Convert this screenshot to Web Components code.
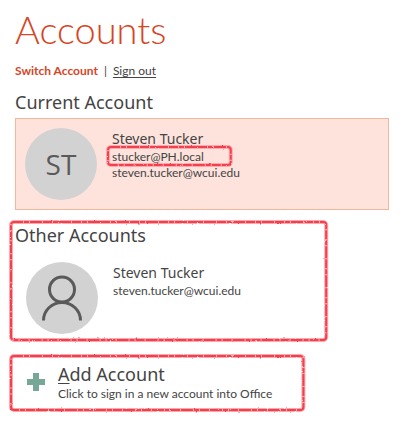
<!DOCTYPE html>
<html lang="en">
<head>
<meta charset="utf-8">
<meta name="viewport" content="width=device-width, initial-scale=1">
<title>Accounts</title>
<style>
    body {
        --heading-font: "Noto Sans", "Open Sans", sans-serif;
        margin: 0;
        background: #fff;
        color: #444;
        font-family: Lato, "Open Sans", sans-serif;
        font-size: 12px;
        line-height: 16px;
    }
</style>
</head>
<body>
<accounts-page></accounts-page>

<script>
// Rough felt-pen outline drawn around whatever is slotted in
class MarkerBox extends HTMLElement {
    constructor() {
        super();
        this.attachShadow({ mode: 'open' });
    }

    connectedCallback() {
        this.shadowRoot.innerHTML = `
            <style>
                :host {
                    display: block;
                    position: relative;
                }
                svg {
                    position: absolute;
                    inset: 0;
                    width: 100%;
                    height: 100%;
                    overflow: visible;
                    pointer-events: none;
                }
                rect {
                    x: 2px;
                    y: 2px;
                    width: calc(100% - 4px);
                    height: calc(100% - 4px);
                    fill: none;
                }
                .soft {
                    stroke: #fba9b0;
                    stroke-width: 4;
                }
                .ink {
                    stroke: #f5404c;
                    stroke-width: 2;
                    stroke-dasharray: 9 1 5 1 12 1;
                }
            </style>
            <slot></slot>
            <svg aria-hidden="true">
                <filter id="rough" x="-5%" y="-20%" width="110%" height="140%" color-interpolation-filters="sRGB">
                    <feTurbulence type="fractalNoise" baseFrequency="0.35" numOctaves="2" seed="4"/>
                    <feDisplacementMap in="SourceGraphic" scale="2" xChannelSelector="R" yChannelSelector="G"/>
                </filter>
                <g filter="url(#rough)">
                    <rect class="soft" rx="3"/>
                    <rect class="ink" rx="3"/>
                </g>
            </svg>
        `;
    }
}

class AccountAvatar extends HTMLElement {
    constructor() {
        super();
        this.attachShadow({ mode: 'open' });
    }

    connectedCallback() {
        const initials = this.getAttribute('initials');
        const person = `
            <svg viewBox="0 0 72 72" aria-hidden="true">
                <circle cx="36" cy="27.500" r="12.500"/>
                <path d="M17.500 58.500a18.500 18 0 0 1 37 0"/>
            </svg>`;

        this.shadowRoot.innerHTML = `
            <style>
                :host {
                    display: flex;
                    flex: none;
                    align-items: center;
                    justify-content: center;
                    width: 72px;
                    height: 72px;
                    border-radius: 50%;
                    background: #d2d2d2;
                    color: #5a5a5a;
                    font-family: "Open Sans", sans-serif;
                    font-size: 28px;
                    line-height: 32px;
                }
                svg {
                    width: 100%;
                    height: 100%;
                    fill: none;
                    stroke: #5a5a5a;
                    stroke-width: 3;
                }
            </style>
            ${initials ? `<span>${initials}</span>` : person}
        `;
    }
}

class AccountCard extends HTMLElement {
    constructor() {
        super();
        this.attachShadow({ mode: 'open' });
    }

    connectedCallback() {
        const name = this.getAttribute('name') || '';
        const initials = this.getAttribute('initials') || '';

        this.shadowRoot.innerHTML = `
            <style>
                :host {
                    display: flex;
                    gap: 15px;
                    padding: 9px;
                    border: 1px solid transparent;
                }
                :host([current]) {
                    background: #fde3dc;
                    border-color: #f5b79c;
                }
                .info {
                    padding-top: 1px;
                }
                .name {
                    font-family: var(--heading-font);
                    font-size: 14px;
                    line-height: 20px;
                }
            </style>
            <account-avatar initials="${initials}"></account-avatar>
            <div class="info">
                <div class="name">${name}</div>
                <slot></slot>
            </div>
        `;
    }
}

class AddAccount extends HTMLElement {
    constructor() {
        super();
        this.attachShadow({ mode: 'open' });
    }

    connectedCallback() {
        this.shadowRoot.innerHTML = `
            <style>
                :host {
                    display: block;
                }
                button {
                    display: flex;
                    align-items: center;
                    gap: 13px;
                    width: 100%;
                    padding: 0;
                    border: none;
                    background: none;
                    color: inherit;
                    font: inherit;
                    text-align: left;
                    cursor: pointer;
                }
                svg {
                    flex: none;
                    width: 18px;
                    height: 18px;
                    fill: #76a797;
                }
                span {
                    display: block;
                }
                .title {
                    font-family: var(--heading-font);
                    font-size: 18px;
                    line-height: 24px;
                }
                u {
                    text-decoration-thickness: 1px;
                    text-underline-offset: 2px;
                }
            </style>
            <button type="button">
                <svg viewBox="0 0 18 18" aria-hidden="true"><path d="M6 0h6v6h6v6h-6v6H6v-6H0V6h6z"/></svg>
                <span>
                    <span class="title"><u>A</u>dd Account</span>
                    <span>Click to sign in a new account into Office</span>
                </span>
            </button>
        `;
    }
}

class AccountsPage extends HTMLElement {
    constructor() {
        super();
        this.attachShadow({ mode: 'open' });
    }

    connectedCallback() {
        this.shadowRoot.innerHTML = `
            <style>
                :host {
                    display: block;
                    padding: 5px 29px 8px 9px;
                }
                h1, h2 {
                    margin: 0;
                    font-weight: 400;
                }
                h1 {
                    color: #d64524;
                    font-size: 38px;
                    font-weight: 300;
                    line-height: 48px;
                }
                h2 {
                    font-family: var(--heading-font);
                    font-size: 18px;
                    line-height: 24px;
                }
                .top {
                    padding-left: 6px;
                }
                nav {
                    display: flex;
                    gap: 6px;
                    margin: 10px 0 11px;
                }
                a {
                    color: inherit;
                    text-underline-offset: 2px;
                }
                .switch {
                    color: #d64524;
                    font-weight: 700;
                    text-decoration: none;
                }
                .top account-card {
                    margin-top: 4px;
                }
                .mail {
                    width: fit-content;
                    margin: -4px 0 -2px -6px;
                    padding: 4px 29px 2px 6px;
                }
                .other {
                    width: 84%;
                    box-sizing: border-box;
                    margin-top: 10px;
                    padding: 3px 6px 0;
                }
                .other account-card {
                    margin-top: 4px;
                    padding: 10px 10px 7px;
                }
                .add {
                    width: 78%;
                    box-sizing: border-box;
                    margin-top: 12px;
                    padding: 8px 8px 10px 18px;
                }
            </style>
            <div class="top">
                <h1>Accounts</h1>
                <nav><a class="switch" href="#switch">Switch Account</a><span>|</span><a href="#signout">Sign out</a></nav>
                <h2>Current Account</h2>
                <account-card current name="Steven Tucker" initials="ST">
                    <marker-box class="mail">stucker@PH.local</marker-box>
                    <div>steven.tucker@wcui.edu</div>
                </account-card>
            </div>
            <marker-box class="other">
                <h2>Other Accounts</h2>
                <account-card name="Steven Tucker">
                    <div>steven.tucker@wcui.edu</div>
                </account-card>
            </marker-box>
            <marker-box class="add">
                <add-account></add-account>
            </marker-box>
        `;
    }
}

customElements.define('marker-box', MarkerBox);
customElements.define('account-avatar', AccountAvatar);
customElements.define('account-card', AccountCard);
customElements.define('add-account', AddAccount);
customElements.define('accounts-page', AccountsPage);
</script>
</body>
</html>
